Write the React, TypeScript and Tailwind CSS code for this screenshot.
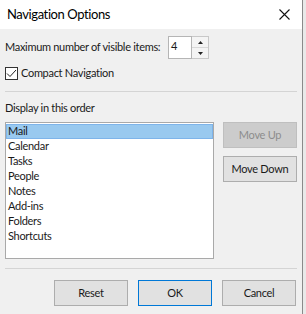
const items = ["Mail", "Calendar", "Tasks", "People", "Notes", "Add-ins", "Folders", "Shortcuts"];

const font = { fontFamily: 'Lato, "Noto Sans", sans-serif' };

export default function App() {
  return (
    <div className="flex h-[314px] w-[306px] bg-[#e9e9e9]" style={font}>
      <div className="flex w-[303px] flex-col border-r border-[#8a8a8a] bg-[#f0f0f0] text-[11px] tracking-[-0.3px] text-[#1a1a1a]">
        {/* title bar */}
        <div className="flex h-[29px] items-center justify-between bg-white pl-[7px] pr-[12px]">
          <span className="text-[13px] tracking-[-0.4px] text-black">Navigation Options</span>
          <svg width="11" height="11" viewBox="0 0 11 11">
            <path d="M0.5 0.5 L10.5 10.5 M10.5 0.5 L0.5 10.5" stroke="#111" strokeWidth="1.1" />
          </svg>
        </div>

        <div className="flex flex-col px-[5px]">
          {/* visible items */}
          <div className="mt-[7px] flex h-[23px] items-center">
            <span className="w-[163px] whitespace-nowrap">Maximum number of visible items:</span>
            <div className="flex h-[23px] w-[24px] items-start border border-[#b5b5b5] bg-white pl-[2px] pt-[1px] leading-[16px]">4</div>
            <div className="flex h-[23px] w-[17px] flex-col border border-l-0 border-[#c8c8c8] bg-[#f4f4f4]">
              <div className="flex flex-1 items-center justify-center border-b border-[#d8d8d8]">
                <svg width="5" height="3" viewBox="0 0 5 3"><path d="M0 3 L2.5 0 L5 3 Z" fill="#222" /></svg>
              </div>
              <div className="flex flex-1 items-center justify-center">
                <svg width="5" height="3" viewBox="0 0 5 3"><path d="M0 0 L2.5 3 L5 0 Z" fill="#222" /></svg>
              </div>
            </div>
          </div>

          {/* compact navigation */}
          <div className="mt-[7px] flex h-[14px] items-center gap-[3px]">
            <div className="flex h-[13px] w-[13px] items-center justify-center border border-[#333] bg-white">
              <svg width="11" height="9" viewBox="0 0 11 9">
                <path d="M1 4.5 L4 7.5 L10 1" stroke="#222" strokeWidth="1" fill="none" />
              </svg>
            </div>
            <span>Compact Navigation</span>
          </div>

          <div className="mt-[11px] h-px w-[292px] bg-[#d4d4d4]" />

          <div className="mt-[9px] h-[14px] leading-[14px]">Display in this order</div>

          {/* list and move buttons */}
          <div className="mt-[7px] flex">
            <div className="flex h-[137px] w-[209px] flex-col border border-[#a9a9a9] bg-white pt-px">
              {items.map((item, i) => (
                <div
                  key={item}
                  className={
                    i === 0
                      ? "flex h-[15px] items-center border border-[#7eb4ea] bg-[#99c9ef] pl-[1px]"
                      : "flex h-[15px] items-center pl-[2px]"
                  }
                >
                  {item}
                </div>
              ))}
            </div>
            <div className="ml-[9px] flex flex-col gap-[8px]">
              <div className="flex h-[26px] w-[74px] items-center justify-center border border-[#bfbfbf] bg-[#cccccc] text-[#8c8c8c]">
                Move Up
              </div>
              <div className="flex h-[26px] w-[74px] items-center justify-center border border-[#adadad] bg-[#e1e1e1]">
                Move Down
              </div>
            </div>
          </div>

          <div className="mt-[9px] h-px w-[292px] bg-[#d4d4d4]" />

          {/* bottom buttons */}
          <div className="mt-[11px] flex justify-end gap-[10px] pr-[1px]">
            <div className="flex h-[26px] w-[74px] items-center justify-center border border-[#adadad] bg-[#e1e1e1]">Reset</div>
            <div className="flex h-[26px] w-[74px] items-center justify-center border border-[#0078d7] bg-[#e1e1e1]">OK</div>
            <div className="flex h-[26px] w-[74px] items-center justify-center border border-[#adadad] bg-[#e1e1e1]">Cancel</div>
          </div>
        </div>
      </div>
    </div>
  );
}
